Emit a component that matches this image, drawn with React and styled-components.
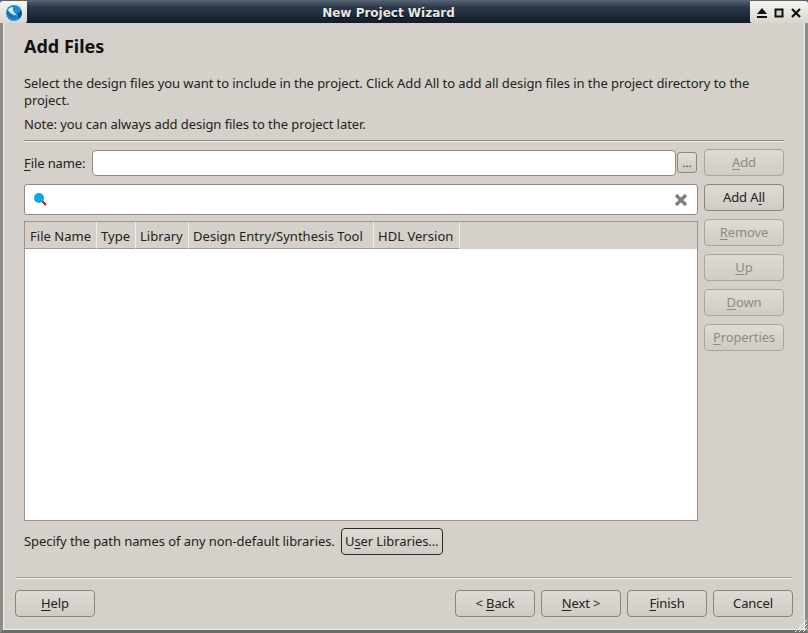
import React from "react";
import styled, { createGlobalStyle } from "styled-components";

const Global = createGlobalStyle`
  html, body { margin: 0; padding: 0; background: #d4d0c8; }
  body { font-family: "Noto Sans", sans-serif; font-size: 13px; color: #1a1a1a; }
`;

const Window = styled.div`
  position: relative;
  width: 808px;
  height: 633px;
  box-sizing: border-box;
  display: flex;
  flex-direction: column;
  background: #d5d1ca;
  overflow: hidden;
`;

const TitleBar = styled.div`
  height: 23px;
  flex: none;
  display: flex;
  background: linear-gradient(#5a6573 0, #2c3a4b 30%, #101c2c 100%);
`;

const IconTab = styled.div`
  width: 27px;
  display: flex;
  align-items: center;
  justify-content: center;
  margin-top: 1px;
  padding-top: 1px;
  border-radius: 3px 0 2px 0;
  background: linear-gradient(#f6f5f2, #d9d6cf);
`;

const Title = styled.div`
  flex: 1;
  text-align: center;
  color: #e8e8e8;
  font: bold 12px/27px "DejaVu Sans", sans-serif;
  text-shadow: 0 1px 1px #000;
`;

const ControlTab = styled.div`
  width: 58px;
  margin-top: 1px;
  padding: 1px 0 0 6px;
  box-sizing: border-box;
  display: flex;
  align-items: center;
  gap: 5px;
  border-radius: 0 3px 0 2px;
  background: linear-gradient(#f6f5f2, #d9d6cf);
`;

const Body = styled.div`
  flex: 1;
  display: flex;
  flex-direction: column;
  box-sizing: border-box;
  border-left: 3px solid #8c8c88;
  border-right: 3px solid #8c8c88;
  border-bottom: 3px solid #6b6b68;
  box-shadow: inset 1px 0 #f0eee9, inset -1px 0 #f0eee9, inset 0 -1px #f0eee9;
  padding: 0 12px 13px;
`;

const Inner = styled.div`
  flex: 1;
  display: flex;
  flex-direction: column;
  padding: 0 9px;
`;

const Heading = styled.h1`
  margin: 12px 0 0;
  font-size: 18px;
  line-height: 22px;
  font-weight: 700;
  color: #111;
`;

const Para = styled.p`
  margin: ${(p) => p.top}px 0 0;
  line-height: 17px;
  letter-spacing: -0.07px;
  color: #222;
`;

const Rule = styled.div`
  height: 1px;
  background: ${(p) => p.color || "#8a8780"};
  box-shadow: 0 1px #efede8;
  flex: none;
`;

const TopRule = styled(Rule)`
  margin-top: 7px;
`;

const Columns = styled.div`
  display: grid;
  grid-template-columns: 674px 80px;
  column-gap: 6px;
  margin-top: 8px;
`;

const LeftCol = styled.div`
  display: flex;
  flex-direction: column;
`;

const RightCol = styled.div`
  display: flex;
  flex-direction: column;
  gap: 8px;
`;

const FileRow = styled.div`
  display: flex;
  align-items: center;
  height: 27px;
`;

const Label = styled.label`
  width: 68px;
  letter-spacing: -0.1px;
  color: #222;
`;

const Input = styled.div`
  width: 582px;
  height: 24px;
  background: #fff;
  border: 1px solid #8f8b80;
  border-radius: 4px;
`;

const Browse = styled.div`
  width: 20px;
  height: 21px;
  margin-left: 1px;
  box-sizing: border-box;
  border: 1px solid #8c887c;
  border-radius: 3px;
  background: linear-gradient(#e2dfd9, #cfcbc3);
  text-align: center;
  line-height: 19px;
  font-size: 11px;
  color: #222;
`;

const Search = styled.div`
  height: 29px;
  margin-top: 8px;
  background: #fff;
  border: 1px solid #8f8b80;
  border-radius: 3px;
  display: flex;
  align-items: center;
  justify-content: space-between;
  padding: 0 9px 0 8px;
`;

const Table = styled.div`
  height: 298px;
  margin-top: 6px;
  border: 1px solid #9a968d;
  display: flex;
  flex-direction: column;
  background: #fff;
`;

const HeadRow = styled.div`
  height: 27px;
  flex: none;
  display: flex;
  background: #d5d1ca;
`;

const HeadCell = styled.div`
  width: ${(p) => p.w}px;
  box-sizing: border-box;
  padding-left: ${(p) => p.pad}px;
  line-height: 28px;
  letter-spacing: 0.03px;
  white-space: nowrap;
  color: #222;
  border-right: 1px solid #efede8;
  border-bottom: 1px solid #a19d93;
`;

const HeadFill = styled.div`
  flex: 1;
`;

const Btn = styled.div`
  width: ${(p) => p.w || 80}px;
  height: 27px;
  flex: none;
  box-sizing: border-box;
  border: 1px solid ${(p) => (p.strong ? "#2a2a28" : p.off ? "#aaa69c" : "#8a867a")};
  border-radius: 4px;
  background: linear-gradient(#dedbd5, #d0ccc5);
  color: ${(p) => (p.off ? "#8f8c85" : "#222")};
  text-align: center;
  line-height: 25px;
  letter-spacing: -0.1px;
  white-space: nowrap;
`;

const Under = styled.span`
  text-decoration: underline;
  text-underline-offset: 2px;
`;

const LibRow = styled.div`
  display: flex;
  align-items: center;
  height: 27px;
  margin-top: 7px;
  gap: 6px;
`;

const LibText = styled.span`
  padding-bottom: 2px;
  letter-spacing: -0.07px;
  color: #222;
`;

const BottomRule = styled(Rule)`
  margin-top: 22px;
`;

const Footer = styled.div`
  display: flex;
  justify-content: space-between;
  margin-top: 12px;
`;

const FooterGroup = styled.div`
  display: flex;
  gap: 6px;
`;

const Grip = styled.svg`
  position: absolute;
  right: 0;
  bottom: 0;
`;

const Logo = () => (
  <svg width="18" height="18" viewBox="0 0 18 18">
    <circle cx="9" cy="9" r="8" fill="#1b8fd2" />
    <path d="M2 6 C4 10 8 13 13 13 C10 16 4 15 2 10Z" fill="#1573b0" />
    <path d="M3 6 C5 9 8 11 12 11 C9 9 7 6 8 3 C6 3 4 4 3 6Z" fill="#e9f4f9" />
    <path d="M12 9 C14 9 16 8 16 6 C17.5 9 16.5 13 14 14.5 C13 12 13 11 12 9Z" fill="#0a4f86" />
  </svg>
);

const WindowControls = () => (
  <>
    <svg width="12" height="12" viewBox="0 0 12 12">
      <path d="M6 1 L11 7 H1Z M1 9 H11 V11 H1Z" fill="#111" />
    </svg>
    <svg width="12" height="12" viewBox="0 0 12 12">
      <path d="M2.5 2.5 H9.5 V9.5 H2.5Z" fill="#d8d6d0" stroke="#111" strokeWidth="2" />
    </svg>
    <svg width="12" height="12" viewBox="0 0 12 12">
      <path d="M2 2 L10 10 M10 2 L2 10" fill="none" stroke="#111" strokeWidth="2.2" />
    </svg>
  </>
);

const SearchIcon = () => (
  <svg width="15" height="15" viewBox="0 0 15 15">
    <path d="M8 8 L13 13" stroke="#b01020" strokeWidth="2" />
    <circle cx="6" cy="6" r="5" fill="#0ea5ec" />
  </svg>
);

const ClearIcon = () => (
  <svg width="14" height="14" viewBox="0 0 14 14">
    <path d="M2 2 L12 12 M12 2 L2 12" stroke="#7f7f7c" strokeWidth="3.2" />
  </svg>
);

const columns = [
  ["File Name", 72, 5],
  ["Type", 39, 4],
  ["Library", 53, 4],
  ["Design Entry/Synthesis Tool", 185, 4],
  ["HDL Version", 86, 4],
];

export default function App() {
  return (
    <Window>
      <Global />
      <TitleBar>
        <IconTab>
          <Logo />
        </IconTab>
        <Title>New Project Wizard</Title>
        <ControlTab>
          <WindowControls />
        </ControlTab>
      </TitleBar>
      <Body>
        <Inner>
          <Heading>Add Files</Heading>
          <Para top={18}>
            Select the design files you want to include in the project. Click Add All to add all design files in the project directory to the project.
          </Para>
          <Para top={7}>Note: you can always add design files to the project later.</Para>
          <TopRule />
          <Columns>
            <LeftCol>
              <FileRow>
                <Label>
                  <Under>F</Under>ile name:
                </Label>
                <Input />
                <Browse>...</Browse>
              </FileRow>
              <Search>
                <SearchIcon />
                <ClearIcon />
              </Search>
              <Table>
                <HeadRow>
                  {columns.map(([name, w, pad]) => (
                    <HeadCell key={name} w={w} pad={pad}>
                      {name}
                    </HeadCell>
                  ))}
                  <HeadFill />
                </HeadRow>
              </Table>
            </LeftCol>
            <RightCol>
              <Btn off><Under>A</Under>dd</Btn>
              <Btn>Add A<Under>l</Under>l</Btn>
              <Btn off><Under>R</Under>emove</Btn>
              <Btn off><Under>U</Under>p</Btn>
              <Btn off><Under>D</Under>own</Btn>
              <Btn off><Under>P</Under>roperties</Btn>
            </RightCol>
          </Columns>
          <LibRow>
            <LibText>Specify the path names of any non-default libraries.</LibText>
            <Btn strong w={102}>
              U<Under>s</Under>er Libraries...
            </Btn>
          </LibRow>
        </Inner>
        <BottomRule color="#a5a29b" />
        <Footer>
          <Btn><Under>H</Under>elp</Btn>
          <FooterGroup>
            <Btn>&lt; <Under>B</Under>ack</Btn>
            <Btn><Under>N</Under>ext &gt;</Btn>
            <Btn><Under>F</Under>inish</Btn>
            <Btn>Cancel</Btn>
          </FooterGroup>
        </Footer>
      </Body>
      <Grip width="14" height="14" viewBox="0 0 14 14">
        <path d="M1 13 L13 1 M5 13 L13 5 M9 13 L13 9" stroke="#f4f3ef" strokeWidth="1" />
      </Grip>
    </Window>
  );
}
